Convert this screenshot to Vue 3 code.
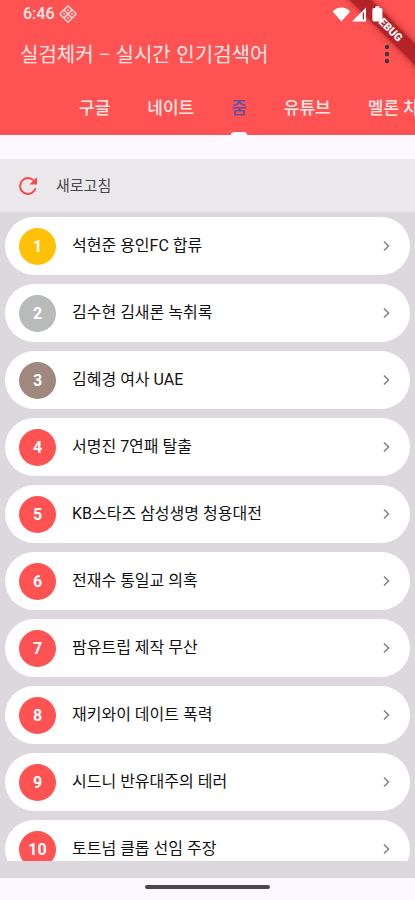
<script setup>
import { ref } from 'vue'

const tabs = ['구글', '네이트', '줌', '유튜브', '멜론 차트']
const activeTab = ref(2)

const keywords = [
  '석현준 용인FC 합류',
  '김수현 김새론 녹취록',
  '김혜경 여사 UAE',
  '서명진 7연패 탈출',
  'KB스타즈 삼성생명 청용대전',
  '전재수 통일교 의혹',
  '팜유트립 제작 무산',
  '재키와이 데이트 폭력',
  '시드니 반유대주의 테러',
  '토트넘 클롭 선임 주장'
]

const medals = ['gold', 'silver', 'bronze']
</script>

<template>
  <div class="app" lang="ko">
    <header class="header">
      <div class="ribbon"><span>DEBUG</span></div>

      <div class="status">
        <span class="clock">6:46</span>
        <svg class="diamond" viewBox="0 0 18 18" aria-hidden="true">
          <g transform="rotate(45 9 9)" fill="none" stroke="#ffd9d6" stroke-width="1.5">
            <rect x="3.2" y="3.2" width="11.6" height="11.6" rx="1" />
            <path d="M9 3.4v11.2M3.4 9h11.2" />
            <path d="M5.3 6.2h1.8M10.9 6.2h1.8M5.3 11.8h1.8M10.9 11.8h1.8" />
          </g>
        </svg>
        <span class="spacer"></span>
        <svg class="signals" viewBox="0 0 54 18" aria-hidden="true">
          <path d="M0.6 6.6C5.6 1.2 13.2 1.2 18.2 6.6L9.4 16.6Z" fill="#fff" />
          <path d="M34 2.6V16.6H20Z" fill="#fff" />
          <path d="M31.4 7.4V14.4" stroke="#b22428" stroke-width="1.3" />
          <path d="M43.4 1.2h4v1.8h1.4q1.6 0 1.6 1.6v10.2q0 1.6-1.6 1.6h-6.8q-1.6 0-1.6-1.6V4.600q0-1.600 1.600-1.600h1.400z" fill="#fff" />
        </svg>
      </div>

      <div class="titlebar">
        <h1>실검체커 – 실시간 인기검색어</h1>
        <button class="more" type="button" aria-label="메뉴">
          <svg viewBox="0 0 24 24" aria-hidden="true">
            <g fill="#3a3a42">
              <circle cx="12" cy="5" r="2.2" />
              <circle cx="12" cy="12" r="2.2" />
              <circle cx="12" cy="19" r="2.2" />
            </g>
          </svg>
        </button>
      </div>

      <nav class="tabs">
        <button
          v-for="(tab, i) in tabs"
          :key="tab"
          type="button"
          class="tab"
          :class="{ active: i === activeTab }"
          @click="activeTab = i"
        >
          <span>{{ tab }}</span>
        </button>
      </nav>
    </header>

    <main class="content">
      <button class="refresh" type="button">
        <svg viewBox="0 0 24 24" aria-hidden="true">
          <path
            d="M18.3 5.7A8.9 8.9 0 0 0 12 3.100a8.900 8.900 0 1 0 8.600 11.100h-2.100A6.900 6.900 0 1 1 12 5.100c1.900 0 3.600.8 4.900 2L13.500 10.500H21V3z"
            fill="#f9484b"
          />
        </svg>
        <span>새로고침</span>
      </button>

      <ol class="list">
        <li v-for="(word, i) in keywords" :key="word">
          <a class="card" href="#">
            <span class="rank" :class="medals[i]">{{ i + 1 }}</span>
            <span class="word">{{ word }}</span>
            <svg class="chevron" viewBox="0 0 12 12" aria-hidden="true">
              <path d="M4 1.5L8.5 6L4 10.5" fill="none" stroke="#858585" stroke-width="1.6" />
            </svg>
          </a>
        </li>
      </ol>
    </main>

    <footer class="navbar"><span class="handle"></span></footer>
  </div>
</template>

<style>
body {
  margin: 0;
}
</style>

<style scoped>
.app {
  display: flex;
  flex-direction: column;
  height: 100vh;
  overflow: hidden;
  background: #fdf7ff;
  font-family: Roboto, 'Noto Sans CJK KR', sans-serif;
  color: #1d1b20;
}

button {
  border: 0;
  padding: 0;
  background: none;
  font: inherit;
  color: inherit;
  cursor: pointer;
}

.header {
  position: relative;
  flex: none;
  overflow: hidden;
  background: #ff5252;
  color: #ffe9e7;
}

.ribbon {
  position: absolute;
  top: 20px;
  right: -33px;
  width: 120px;
  height: 15px;
  transform: rotate(45deg);
  background: #b22428;
  box-shadow: 0 0 6px rgba(100, 0, 0, 0.6);
  color: #fff;
  font-size: 11px;
  font-weight: 900;
  line-height: 15px;
  text-align: center;
}

.status {
  position: relative;
  display: flex;
  align-items: center;
  height: 28px;
  padding: 0 29px 0 23px;
}

.clock {
  font-size: 16px;
  font-weight: 500;
  line-height: 28px;
}

.diamond {
  width: 18px;
  height: 18px;
  margin-left: 4px;
}

.spacer {
  flex: 1;
}

.signals {
  width: 54px;
  height: 18px;
}

.titlebar {
  display: flex;
  align-items: center;
  justify-content: space-between;
  height: 52px;
  padding: 0 16px 0 20px;
}

h1 {
  margin: 0;
  font-family: 'Noto Sans CJK KR', sans-serif;
  font-size: 20px;
  font-weight: 400;
  line-height: 28px;
  white-space: nowrap;
}

.more,
.more svg {
  display: block;
  width: 24px;
  height: 24px;
}

.tabs {
  display: flex;
  height: 55px;
  padding-left: 60px;
  overflow: hidden;
}

.tab {
  display: flex;
  flex: none;
  flex-direction: column;
  padding: 0 18px 0 19px;
  font-size: 17px;
  font-weight: 500;
  line-height: 56px;
  white-space: nowrap;
}

.tab span {
  height: 52px;
}

.tab::after {
  content: '';
  height: 3px;
  border-radius: 3px 3px 0 0;
}

.tab.active {
  color: #6750a4;
}

.tab.active::after {
  background: #fdf7ff;
}

.content {
  display: flex;
  flex: 1;
  flex-direction: column;
  min-height: 0;
  margin-top: 24px;
  padding-bottom: 17px;
  background: #dcd8dd;
}

.refresh {
  display: flex;
  flex: none;
  align-items: center;
  gap: 16px;
  height: 53px;
  padding: 0 16px;
  background: #ebe8eb;
  color: #4a474b;
  font-size: 15px;
  line-height: 24px;
}

.refresh svg {
  width: 24px;
  height: 24px;
}

.list {
  display: flex;
  flex: 1;
  flex-direction: column;
  gap: 9px;
  min-height: 0;
  margin: 0;
  padding: 5px 5px 0;
  overflow-y: auto;
  scrollbar-width: none;
  list-style: none;
}

.card {
  display: flex;
  align-items: center;
  height: 58px;
  box-sizing: border-box;
  padding: 0 18px 0 14px;
  border-radius: 29px;
  background: #fff;
  color: #111;
  text-decoration: none;
}

.rank {
  flex: none;
  width: 37px;
  border-radius: 50%;
  background: #ff5252;
  color: #fff;
  font-size: 16px;
  font-weight: 700;
  line-height: 37px;
  text-align: center;
}

.rank.gold {
  background: #ffc107;
}

.rank.silver {
  background: #b9bbba;
}

.rank.bronze {
  background: #a1887f;
}

.word {
  flex: 1;
  margin-left: 16px;
  font-size: 16px;
  line-height: 24px;
}

.chevron {
  width: 12px;
  height: 12px;
}

.navbar {
  display: flex;
  flex: none;
  justify-content: center;
  height: 22px;
  padding-top: 7px;
  box-sizing: border-box;
}

.handle {
  width: 30%;
  height: 4px;
  border-radius: 2px;
  background: #4b474e;
}
</style>
